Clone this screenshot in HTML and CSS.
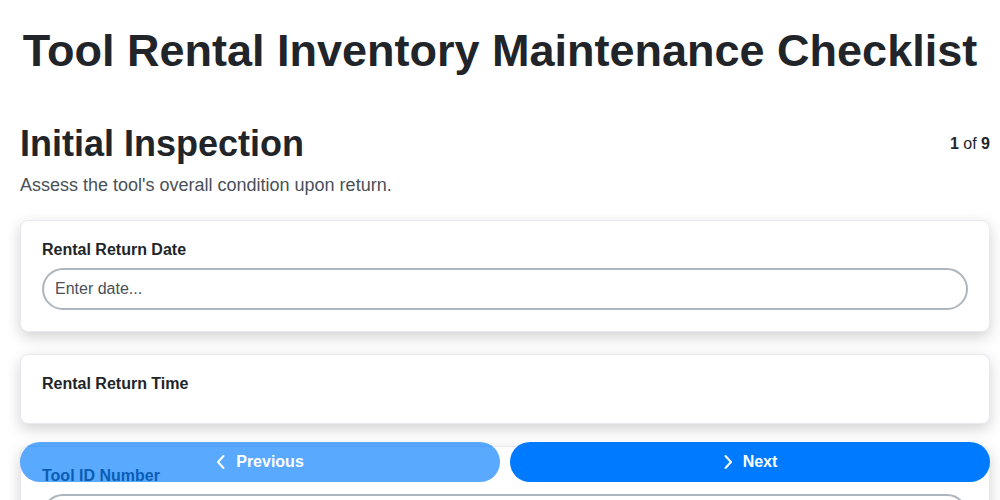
FILE: index.html
```html
<!DOCTYPE html>
<html lang="en">
<head>
    <meta charset="UTF-8">
    <meta name="viewport" content="width=device-width, initial-scale=1.0">
    <title>Tool Rental Inventory Maintenance Checklist</title>
    <link rel="stylesheet" href="styles.css">
</head>
<body>
    <h1 class="page-title">Tool Rental Inventory Maintenance Checklist</h1>

    <div class="container">
        <div class="step-header">
            <h2>Initial Inspection</h2>
            <div class="counter"><strong>1</strong> of <strong>9</strong></div>
        </div>
        <p class="step-desc">Assess the tool's overall condition upon return.</p>

        <div class="card">
            <label class="field-label" for="return-date">Rental Return Date</label>
            <input class="field-input" type="text" id="return-date" placeholder="Enter date...">
        </div>

        <div class="card">
            <label class="field-label">Rental Return Time</label>
        </div>

        <div class="card">
            <label class="field-label" for="tool-id">Tool ID Number</label>
            <input class="field-input" type="text" id="tool-id">
        </div>

        <div class="card">
            <label class="field-label" for="notes">Visible Damage Notes</label>
            <input class="field-input" type="text" id="notes">
        </div>
    </div>

    <div class="nav">
        <button type="button" class="nav-button prev-button" disabled>
            <svg width="10" height="16" viewBox="0 0 10 16"><path d="M7.5 2 L2 8 L7.5 14" fill="none" stroke="#fff" stroke-width="2" stroke-linecap="round" stroke-linejoin="round"/></svg>
            Previous
        </button>
        <button type="button" class="nav-button next-button">
            <svg width="10" height="16" viewBox="0 0 10 16"><path d="M2.5 2 L8 8 L2.5 14" fill="none" stroke="#fff" stroke-width="2" stroke-linecap="round" stroke-linejoin="round"/></svg>
            Next
        </button>
    </div>
</body>
</html>
```

FILE: styles.css
```css
body {
    margin: 0;
    font-family: "Liberation Sans", Arial, sans-serif;
    color: #212529;
    background: #fff;
}
.page-title {
    font-size: 45px;
    line-height: 1.2;
    text-align: center;
    margin: 24px 0 44px;
}
.container {
    margin: 0 10px 0 20px;
    padding-bottom: 80px;
}
.step-header {
    display: flex;
    justify-content: space-between;
    align-items: center;
    margin-bottom: 7px;
}
.step-header h2 {
    font-size: 36px;
    line-height: 1.2;
    margin: 0;
}
.counter {
    font-size: 16px;
}
.step-desc {
    font-size: 18px;
    line-height: 1.5;
    color: #495057;
    margin: 0 0 21px;
}
.card {
    background: #fff;
    border: 1px solid #e8e8ee;
    border-radius: 8px;
    padding: 19px 21px 21px;
    margin-bottom: 22px;
    box-shadow: 0 5px 15px rgba(0, 0, 0, 0.18);
}
.field-label {
    display: block;
    font-size: 16px;
    font-weight: bold;
    line-height: 20px;
    margin-bottom: 8px;
}
.field-input {
    display: block;
    box-sizing: border-box;
    width: 100%;
    height: 42px;
    padding: 0 11px;
    border: 2px solid #adb5bd;
    border-radius: 21px;
    font-family: inherit;
    font-size: 16px;
    color: #212529;
    outline: none;
}
.field-input::placeholder {
    color: #495057;
}
.nav {
    position: fixed;
    left: 20px;
    right: 10px;
    bottom: 18px;
    display: flex;
    gap: 10px;
}
.nav-button {
    flex: 1;
    height: 40px;
    border: none;
    border-radius: 20px;
    background: #007bff;
    color: #fff;
    font-family: inherit;
    font-size: 16px;
    font-weight: bold;
    display: flex;
    align-items: center;
    justify-content: center;
    gap: 10px;
    cursor: pointer;
}
.prev-button {
    opacity: 0.65;
    cursor: default;
}
```
